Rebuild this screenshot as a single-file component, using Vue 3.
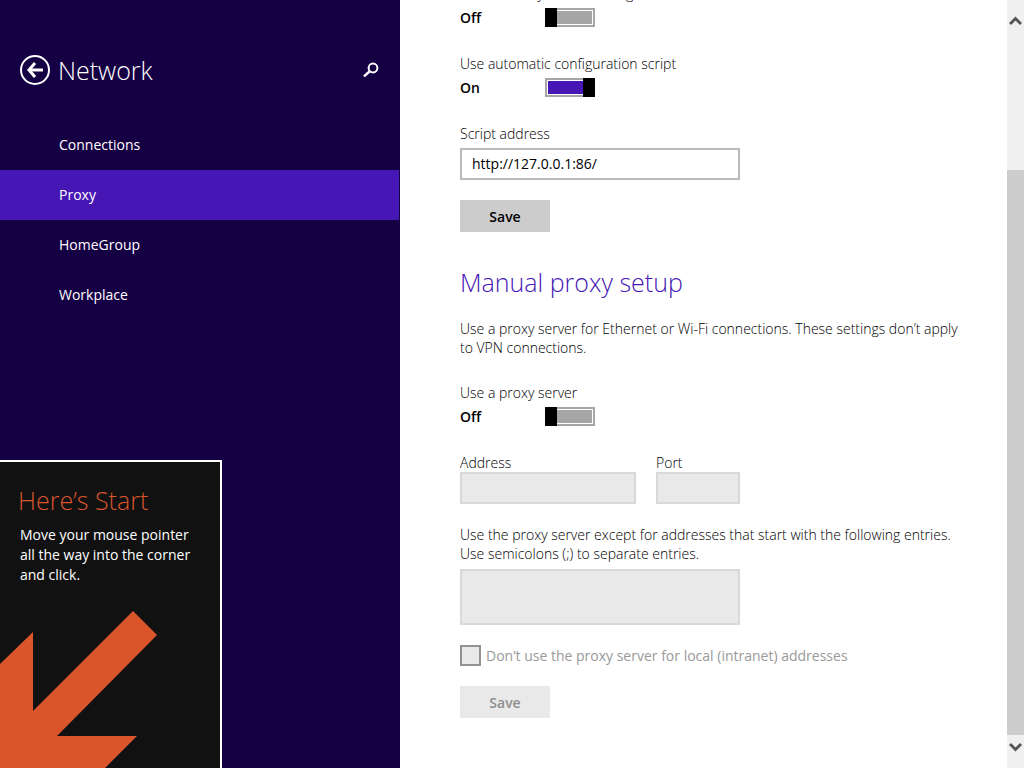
<template>
  <div class="settings">
    <aside class="sidebar">
      <header class="sidebar-header">
        <button class="icon-btn" type="button" aria-label="Back">
          <svg width="32" height="32" viewBox="0 0 32 32" fill="none" stroke="#fff">
            <circle cx="16" cy="16" r="14" stroke-width="2" />
            <path d="M24 16H10" stroke-width="3" />
            <path d="M16 9l-6 7 6 7" stroke-width="3" />
          </svg>
        </button>
        <h1>Network</h1>
        <button class="icon-btn search" type="button" aria-label="Search">
          <svg width="16" height="16" viewBox="0 0 16 16" fill="none" stroke="#fff">
            <circle cx="10" cy="6" r="4.4" stroke-width="2" />
            <path d="M6.6 9.4L1 14.4" stroke-width="2.6" />
          </svg>
        </button>
      </header>

      <nav class="menu">
        <a
          v-for="item in menu"
          :key="item"
          href="#"
          :class="{ active: item === current }"
          @click.prevent="current = item"
        >{{ item }}</a>
      </nav>

      <section class="start-tip">
        <h2>Here’s Start</h2>
        <p>Move your mouse pointer all the way into the corner and click.</p>
        <svg class="start-arrow" width="160" height="157" viewBox="0 0 160 157">
          <path d="M133 0l24 24-100 101h80l-32 32H0V53l33-32v79z" fill="#da552c" />
        </svg>
      </section>
    </aside>

    <main class="content">
      <div class="field">
        <label for="detect">Automatically detect settings</label>
        <div class="toggle-row">
          <span>{{ form.detect ? 'On' : 'Off' }}</span>
          <input id="detect" v-model="form.detect" class="toggle" type="checkbox" />
        </div>
      </div>

      <div class="field">
        <label for="useScript">Use automatic configuration script</label>
        <div class="toggle-row">
          <span>{{ form.useScript ? 'On' : 'Off' }}</span>
          <input id="useScript" v-model="form.useScript" class="toggle" type="checkbox" />
        </div>
      </div>

      <div class="field script">
        <label for="script">Script address</label>
        <input id="script" v-model="form.script" class="text-box" type="text" />
      </div>
      <button class="save" type="button">Save</button>

      <h2 class="section-title">Manual proxy setup</h2>
      <p class="intro">
        Use a proxy server for Ethernet or Wi-Fi connections. These settings don’t apply to VPN connections.
      </p>

      <div class="field">
        <label for="useProxy">Use a proxy server</label>
        <div class="toggle-row">
          <span>{{ form.useProxy ? 'On' : 'Off' }}</span>
          <input id="useProxy" v-model="form.useProxy" class="toggle" type="checkbox" />
        </div>
      </div>

      <div class="server-row">
        <div class="address">
          <label for="address">Address</label>
          <input id="address" v-model="form.address" class="text-box" type="text" :disabled="!form.useProxy" />
        </div>
        <div class="port">
          <label for="port">Port</label>
          <input id="port" v-model="form.port" class="text-box" type="text" :disabled="!form.useProxy" />
        </div>
      </div>

      <label class="except-label" for="except">
        Use the proxy server except for addresses that start with the following entries. Use semicolons (;) to separate entries.
      </label>
      <textarea id="except" v-model="form.except" class="text-box except" :disabled="!form.useProxy"></textarea>

      <div class="check-row">
        <input id="local" v-model="form.local" type="checkbox" :disabled="!form.useProxy" />
        <label for="local">Don’t use the proxy server for local (intranet) addresses</label>
      </div>
      <button class="save" type="button" :disabled="!form.useProxy">Save</button>
    </main>

    <div class="scrollbar">
      <button type="button" aria-label="Scroll up">
        <svg width="13" height="10" viewBox="0 0 13 10"><path d="M1 8l5.500-5.500L12 8" /></svg>
      </button>
      <div class="track"></div>
      <div class="thumb"></div>
      <button type="button" aria-label="Scroll down">
        <svg width="13" height="10" viewBox="0 0 13 10"><path d="M1 2l5.500 5.500L12 2" /></svg>
      </button>
    </div>
  </div>
</template>

<script setup>
import { reactive, ref } from 'vue'

const menu = ['Connections', 'Proxy', 'HomeGroup', 'Workplace']
const current = ref('Proxy')

const form = reactive({
  detect: false,
  useScript: true,
  script: 'http://127.0.0.1:86/',
  useProxy: false,
  address: '',
  port: '',
  except: '',
  local: false
})
</script>

<style>
body {
  margin: 0;
  background: #fff;
}
</style>

<style scoped>
.settings {
  display: flex;
  height: 100vh;
  overflow: hidden;
  font-family: 'Segoe UI', 'Open Sans', 'Noto Sans', sans-serif;
  font-size: 14px;
  line-height: 19px;
  color: #000;
}

.settings * {
  box-sizing: border-box;
}

h1,
h2,
p {
  margin: 0;
}

button,
input,
textarea {
  margin: 0;
  padding: 0;
  border: none;
  border-radius: 0;
  font: inherit;
}

/* sidebar */
.sidebar {
  position: relative;
  flex: 0 0 400px;
  background: #160044;
  color: #fff;
}

.sidebar-header {
  display: flex;
  align-items: center;
  height: 120px;
  padding: 52px 21px 32px 19px;
}

.icon-btn {
  display: flex;
  background: none;
  cursor: pointer;
}

.sidebar-header h1 {
  flex: 1;
  margin-left: 7px;
  font-size: 25px;
  line-height: 36px;
  font-weight: 300;
}

.menu {
  display: flex;
  flex-direction: column;
  padding-right: 1px;
}

.menu a {
  padding-left: 59px;
  line-height: 50px;
  color: #fff;
  text-decoration: none;
}

.menu a.active {
  background: #4617b4;
}

.start-tip {
  position: absolute;
  left: 0;
  bottom: 0;
  width: 222px;
  padding: 20px 20px 0;
  border: 2px solid #fff;
  border-width: 2px 2px 0 0;
  background: #111;
}

.start-tip h2 {
  margin-left: -2px;
  font-size: 25px;
  line-height: 36px;
  font-weight: 300;
  color: #da552c;
}

.start-tip p {
  margin-top: 7px;
  line-height: 20px;
}

.start-arrow {
  display: block;
  margin: 26px 0 0 -20px;
}

/* content, scrolled to its end */
.content {
  flex: 1;
  min-width: 0;
  display: flex;
  flex-direction: column;
  justify-content: flex-end;
  align-items: flex-start;
  padding: 0 40px 50px 60px;
}

label {
  display: block;
}

.content label,
.intro {
  font-weight: 300;
}

.field {
  display: flex;
  flex-direction: column;
  gap: 5px;
  margin-bottom: 27px;
}

.field.script {
  margin-bottom: 20px;
}

.toggle-row {
  display: flex;
  align-items: center;
  height: 19px;
  font-weight: 600;
}

.toggle-row span {
  width: 85px;
}

.toggle {
  position: relative;
  appearance: none;
  width: 50px;
  height: 19px;
  border: 2px solid #a6a6a6;
  background: #a6a6a6;
  box-shadow: inset 0 0 0 1px #fff;
}

.toggle::before {
  content: '';
  position: absolute;
  top: -2px;
  left: -2px;
  width: 12px;
  height: 19px;
  background: #000;
}

.toggle:checked {
  background: #4617b4;
}

.toggle:checked::before {
  left: auto;
  right: -2px;
}

.text-box {
  display: block;
  width: 100%;
  height: 32px;
  padding: 0 10px 2px;
  border: 2px solid #bababa;
  background: #fff;
  color: #000;
}

.text-box:disabled {
  border-color: #d9d9d9;
  background: #e9e9e9;
}

.field .text-box {
  width: 280px;
}

.save {
  flex: none;
  width: 90px;
  height: 32px;
  background: #ccc;
  color: #000;
  font-weight: 600;
}

.save:disabled {
  background: #e9e9e9;
  color: #8e8e8e;
}

.section-title {
  margin: 32px 0 19px;
  font-size: 25px;
  line-height: 36px;
  font-weight: 300;
  color: #4617b4;
}

.intro {
  margin-bottom: 26px;
}

.server-row {
  display: flex;
  gap: 20px;
  width: 280px;
}

.address {
  flex: 1;
}

.port {
  width: 84px;
}

.except-label {
  margin: 21px 0 6px;
}

.except {
  flex: none;
  width: 280px;
  height: 56px;
  resize: none;
}

.check-row {
  display: flex;
  align-items: center;
  gap: 5px;
  margin: 20px 0;
}

.check-row input {
  appearance: none;
  width: 21px;
  height: 21px;
  border: 2px solid #929292;
  background: #e9e9e9;
}

.check-row label {
  font-weight: 400;
  color: #999;
}

/* scrollbar */
.scrollbar {
  display: flex;
  flex-direction: column;
  flex: 0 0 17px;
  background: #f0f0f0;
}

.scrollbar button {
  display: flex;
  align-items: center;
  justify-content: center;
  height: 33px;
  background: none;
}

.scrollbar button:first-child {
  height: 34px;
  padding-top: 8px;
}

.scrollbar button:last-child {
  padding-bottom: 10px;
}

.scrollbar path {
  fill: none;
  stroke: #555;
  stroke-width: 3;
}

.track {
  flex: 6;
}

.thumb {
  flex: 25;
  background: #cdcdcd;
}
</style>
